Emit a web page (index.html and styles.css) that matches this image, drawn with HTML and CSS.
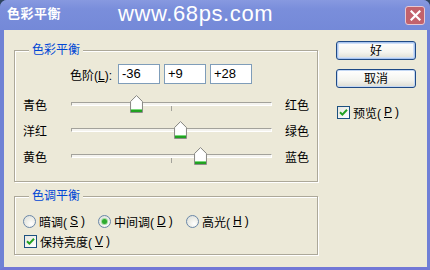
FILE: index.html
```html
<!DOCTYPE html>
<html lang="zh">
<head>
<meta charset="utf-8">
<title>色彩平衡</title>
<link rel="stylesheet" href="styles.css">
</head>
<body>
<div class="window">
  <div class="titlebar">
    <span class="title">色彩平衡</span>
    <span class="watermark">www.68ps.com</span>
    <span class="close">
      <svg width="11" height="11" viewBox="0 0 11 11"><path d="M1.5 1.5 L9.5 9.5 M9.5 1.5 L1.5 9.5" stroke="#fff" stroke-width="2.2" stroke-linecap="square"/></svg>
    </span>
  </div>
  <div class="body">
    <div class="main">
      <div class="group group-color">
        <span class="legend">色彩平衡</span>
        <div class="levels">
          <span class="levels-label">色阶(<u>L</u>):</span>
          <span class="input">-36</span>
          <span class="input">+9</span>
          <span class="input">+28</span>
        </div>
        <div class="sliders">
          <div class="slider-row">
            <span class="lbl">青色</span>
            <div class="track tick">
              <svg class="thumb" style="left:58px" width="13" height="18" viewBox="0 0 13 18"><path d="M0.5 6.5 L6.5 0.5 L12.5 6.5 L12.5 17.5 L0.5 17.5 Z" fill="#f4f4f0" stroke="#8c8c88"/><path d="M1.5 7 L6.5 2 L11.5 7 L11.5 14 L1.5 14 Z" fill="#ffffff"/><rect x="1" y="14" width="11" height="3" fill="#21a121"/><rect x="1" y="14" width="11" height="1" fill="#7bd97b"/></svg>
            </div>
            <span class="lbl-r">红色</span>
          </div>
          <div class="slider-row">
            <span class="lbl">洋红</span>
            <div class="track">
              <svg class="thumb" style="left:102px" width="13" height="18" viewBox="0 0 13 18"><path d="M0.5 6.5 L6.5 0.5 L12.5 6.5 L12.5 17.5 L0.5 17.5 Z" fill="#f4f4f0" stroke="#8c8c88"/><path d="M1.5 7 L6.5 2 L11.5 7 L11.5 14 L1.5 14 Z" fill="#ffffff"/><rect x="1" y="14" width="11" height="3" fill="#21a121"/><rect x="1" y="14" width="11" height="1" fill="#7bd97b"/></svg>
            </div>
            <span class="lbl-r">绿色</span>
          </div>
          <div class="slider-row">
            <span class="lbl">黄色</span>
            <div class="track tick">
              <svg class="thumb" style="left:122px" width="13" height="18" viewBox="0 0 13 18"><path d="M0.5 6.5 L6.5 0.5 L12.5 6.5 L12.5 17.5 L0.5 17.5 Z" fill="#f4f4f0" stroke="#8c8c88"/><path d="M1.5 7 L6.5 2 L11.5 7 L11.5 14 L1.5 14 Z" fill="#ffffff"/><rect x="1" y="14" width="11" height="3" fill="#21a121"/><rect x="1" y="14" width="11" height="1" fill="#7bd97b"/></svg>
            </div>
            <span class="lbl-r">蓝色</span>
          </div>
        </div>
      </div>
      <div class="group group-tone">
        <span class="legend">色调平衡</span>
        <div class="radios">
          <span class="radio-item r1"><span class="radio"></span>暗调(<u>S</u>)</span>
          <span class="radio-item r2"><span class="radio checked"></span>中间调(<u>D</u>)</span>
          <span class="radio-item"><span class="radio"></span>高光(<u>H</u>)</span>
        </div>
        <div class="check-row">
          <span class="checkbox"><svg width="9" height="9" viewBox="0 0 9 9"><path d="M1 4.2 L3.4 6.6 L8 1.8" fill="none" stroke="#21a121" stroke-width="2"/></svg></span>保持亮度(<u>V</u>)
        </div>
      </div>
    </div>
    <div class="side">
      <span class="btn btn-default">好</span>
      <span class="btn">取消</span>
      <div class="check-row preview">
        <span class="checkbox"><svg width="9" height="9" viewBox="0 0 9 9"><path d="M1 4.2 L3.4 6.6 L8 1.8" fill="none" stroke="#21a121" stroke-width="2"/></svg></span>预览(<u>P</u>)
      </div>
    </div>
  </div>
</div>
</body>
</html>
```
FILE: styles.css
```css
* { box-sizing: border-box; }
html, body { margin: 0; padding: 0; }
body {
  width: 430px;
  height: 270px;
  overflow: hidden;
  background: #2f4560;
  font-family: "Liberation Sans", "Noto Sans CJK SC", sans-serif;
  font-size: 12px;
  color: #000;
}
.window {
  width: 430px;
  height: 270px;
  display: flex;
  flex-direction: column;
  border-radius: 7px 7px 0 0;
  overflow: hidden;
  background: #7688d8;
}
.titlebar {
  height: 30px;
  flex: none;
  display: flex;
  align-items: center;
  padding: 0 5px 2px 7px;
  background: linear-gradient(#8799e0 0%, #7a8edb 30%, #7489d8 100%);
}
.title {
  color: #fff;
  font-size: 13px;
  font-weight: bold;
  letter-spacing: 0.5px;
  width: 111px;
  line-height: 16px;
}
.watermark {
  color: #fff;
  font-family: "Liberation Sans", Arial, sans-serif;
  font-size: 22px;
  letter-spacing: 0.6px;
  line-height: 24px;
  flex: 1;
}
.close {
  width: 20px;
  height: 19px;
  margin-top: 2px;
  border: 1px solid #e6c8d2;
  border-radius: 3px;
  background: #c2626c;
  display: flex;
  align-items: center;
  justify-content: center;
}
.body {
  flex: 1;
  display: flex;
  background: #ece9d8;
  border-left: 4px solid #6f82d5;
  border-right: 3px solid #6f7fd6;
  border-bottom: 3px solid #7278d6;
}
.main {
  padding: 20px 0 0 10px;
}
.group {
  position: relative;
  width: 304px;
  border: 1px solid #aca899;
  box-shadow: 1px 1px 0 #fff, inset 1px 1px 0 #fff;
}
.group-color { height: 132px; }
.group-tone { height: 59px; margin-top: 14px; }
.legend {
  position: absolute;
  left: 14px;
  top: -8px;
  padding: 0 3px;
  background: #ece9d8;
  color: #0046d5;
  line-height: 14px;
}
.levels {
  display: flex;
  align-items: center;
  margin-top: 13px;
  padding-left: 55px;
  height: 20px;
  gap: 4px;
}
.levels-label {
  width: 48px;
  margin-right: -4px;
}
.input {
  width: 42px;
  height: 20px;
  border: 1px solid #7f9db9;
  background: #fff;
  font-family: "Liberation Sans", Arial, sans-serif;
  font-size: 13px;
  line-height: 18px;
  padding-left: 3px;
}
.sliders {
  margin-top: 7px;
}
.slider-row {
  display: grid;
  grid-template-columns: 48px 201px auto;
  align-items: center;
  height: 26px;
  padding-left: 8px;
}
.lbl-r { margin-left: 13px; }
.track {
  position: relative;
  height: 4px;
  border-top: 1px solid #a3a29b;
  border-left: 1px solid #a3a29b;
  border-bottom: 1px solid #fff;
  border-right: 1px solid #fff;
  background: #f4f3ee;
}
.track.tick::after {
  content: "";
  position: absolute;
  left: 99px;
  top: 3px;
  width: 1px;
  height: 5px;
  background: #a3a29b;
}
.thumb {
  position: absolute;
  top: -8px;
  z-index: 1;
}
.radios {
  display: flex;
  align-items: center;
  margin-top: 17px;
  padding-left: 8px;
  height: 14px;
}
.radio-item {
  display: flex;
  align-items: center;
  gap: 3px;
}
.r1 { width: 75px; }
.r2 { width: 88px; }
.radio {
  width: 13px;
  height: 13px;
  border-radius: 50%;
  border: 1px solid #6a87a8;
  background: radial-gradient(circle at 65% 70%, #fff 0%, #f0f0ea 40%, #d8dcd8 100%);
  display: flex;
  align-items: center;
  justify-content: center;
}
.radio.checked::after {
  content: "";
  width: 5px;
  height: 5px;
  border-radius: 50%;
  background: #2eaa2e;
  box-shadow: 0 0 0 1px #9fdc9f;
}
.check-row {
  display: flex;
  align-items: center;
  gap: 3px;
  height: 14px;
  margin-top: 6px;
  padding-left: 9px;
}
.checkbox {
  width: 13px;
  height: 13px;
  border: 1px solid #1c5180;
  background: linear-gradient(135deg, #e6e6e0, #fff);
  display: flex;
  align-items: center;
  justify-content: center;
}
.side {
  display: flex;
  flex-direction: column;
  padding: 11px 0 0 18px;
}
.btn {
  width: 80px;
  height: 19px;
  border: 1px solid #1f4a86;
  border-radius: 3px;
  background: linear-gradient(#fff 0%, #f4f4ef 60%, #dcdcd2 100%);
  display: flex;
  align-items: center;
  justify-content: center;
  line-height: 14px;
  box-shadow: inset 0 0 0 1px #c4d8f4;
}
.btn + .btn { margin-top: 9px; }
.btn-default {
  box-shadow: inset 0 0 0 1px #a8c4ef, inset 0 0 0 2px #cfdff6;
}
.preview {
  margin-top: 17px;
  padding-left: 1px;
}
```
